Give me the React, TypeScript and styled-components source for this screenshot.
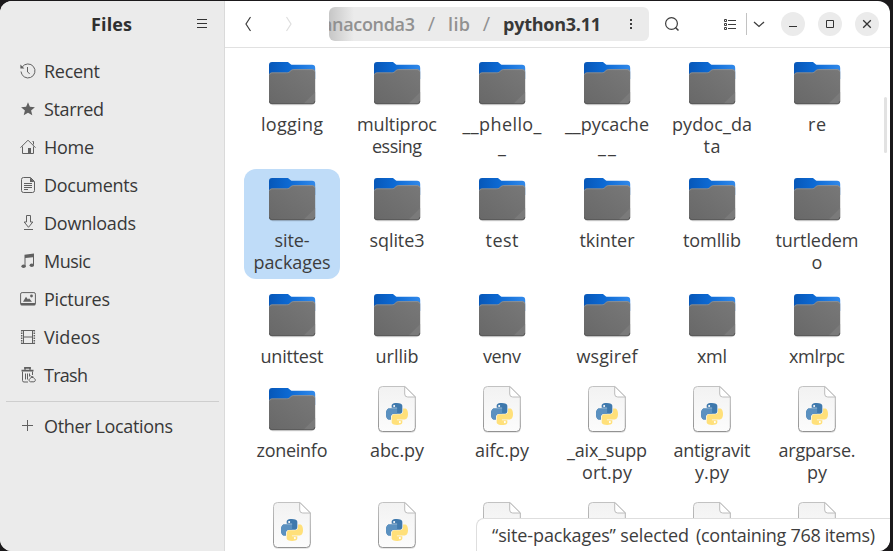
import React, { useLayoutEffect, useRef, useState } from "react";
import styled, { createGlobalStyle } from "styled-components";

const GlobalStyle = createGlobalStyle`
  * { box-sizing: border-box; }
  body {
    margin: 0;
    background: #1b191b;
    font-family: "Open Sans", "Noto Sans", sans-serif;
    font-size: 18px;
    color: #3d3d3d;
    overflow: hidden;
  }
  svg { display: block; flex: none; }
`;

const Window = styled.div`
  display: grid;
  grid-template-columns: 225px 1fr;
  width: 890px;
  height: 550px;
  margin-top: 1px;
  border-radius: 12px;
  overflow: hidden;
  background: #fff;
  position: relative;
`;

const Sidebar = styled.aside`
  display: flex;
  flex-direction: column;
  background: #ebebeb;
  border-right: 1px solid #dadada;
`;

const SidebarHeader = styled.header`
  display: grid;
  grid-template-columns: 1fr 34px;
  align-items: center;
  height: 46px;
  padding: 0 5px 0 38px;
  margin-bottom: 5px;
`;

const Title = styled.h1`
  margin: 0;
  font-size: 18px;
  font-weight: 700;
  line-height: 22px;
  text-align: center;
  color: #2f2f2f;
`;

const Centered = styled.div`
  display: flex;
  justify-content: center;
  align-items: center;
`;

const PlaceRow = styled.div`
  display: flex;
  align-items: center;
  height: 38px;
  padding-left: 20px;
  gap: 8px;
  line-height: 22px;
  color: #383838;
`;

const Separator = styled.hr`
  width: 213px;
  height: 1px;
  margin: 7px 0 5px 6px;
  border: 0;
  background: #cecece;
  flex: none;
`;

const Main = styled.main`
  display: flex;
  flex-direction: column;
  min-width: 0;
  height: 550px;
`;

const Toolbar = styled.header`
  display: flex;
  align-items: center;
  height: 47px;
  flex: none;
  padding-left: 6px;
  border-bottom: 1px solid #e1e1e1;
`;

const ToolButton = styled.button<{ $w: number; $dim?: boolean; $before?: number }>`
  display: flex;
  align-items: center;
  justify-content: center;
  width: ${(p) => p.$w}px;
  height: 34px;
  margin: 0 0 0 ${(p) => p.$before ?? 0}px;
  padding: 0;
  border: 0;
  background: none;
  color: ${(p) => (p.$dim ? "#dedede" : "#3d3d3d")};
`;

const PathBar = styled.div`
  display: flex;
  align-items: center;
  width: 320px;
  height: 34px;
  margin-left: 16px;
  border-radius: 6px;
  background: linear-gradient(to right, #c6c6c6, #ebebeb 25px);
`;

const Crumbs = styled.div`
  display: flex;
  flex: 1;
  min-width: 0;
  height: 34px;
  padding-right: 12px;
  align-items: center;
  justify-content: flex-end;
  overflow: hidden;
  font-weight: 600;
  line-height: 22px;
  color: #919191;

  > * { flex: none; }
`;

const Slash = styled.span`
  display: flex;
  justify-content: center;
  width: 33px;
  font-size: 20px;
  font-weight: 400;
`;

const Current = styled.span`
  color: #383838;
  font-weight: 700;
`;

const Divider = styled.span`
  width: 1px;
  height: 22px;
  background: #c2c2c2;
`;

const WindowControls = styled.div`
  display: flex;
  gap: 13px;
  margin-left: 11px;
`;

const RoundButton = styled.button`
  display: flex;
  align-items: center;
  justify-content: center;
  width: 24px;
  height: 24px;
  padding: 0;
  border: 0;
  border-radius: 50%;
  background: #ebebeb;
  color: #333;
`;

const FileGrid = styled.div`
  display: grid;
  grid-template-columns: repeat(6, 96px);
  column-gap: 9px;
  row-gap: 6px;
  align-items: start;
  padding: 5px 0 0 19px;
  overflow: hidden;
  flex: 1;
`;

const FileCell = styled.div<{ $selected?: boolean }>`
  display: flex;
  flex-direction: column;
  align-items: center;
  padding: 6px 0;
  border-radius: 12px;
  background: ${(p) => (p.$selected ? "#bfdcf8" : "transparent")};
`;

const FileName = styled.div`
  display: flex;
  flex-direction: column;
  align-items: center;
  margin-top: 6px;
  line-height: 22px;
`;

const ScrollThumb = styled.div`
  position: absolute;
  right: 3px;
  top: 96px;
  width: 3px;
  height: 56px;
  border-radius: 2px;
  background: #e2e2e2;
`;

const StatusBar = styled.div`
  position: absolute;
  right: 0;
  bottom: 0;
  display: flex;
  gap: 7px;
  width: 414px;
  height: 33px;
  padding: 5px 0 0 15px;
  border: 1px solid #dedede;
  border-width: 1px 0 0 1px;
  border-radius: 8px 0 0 0;
  background: #fff;
  line-height: 22px;
  color: #3d3d3d;
`;

const Glyphs = styled.span`
  display: inline-block;
  white-space: pre;
`;

/** A line of text whose tracking is adjusted so that it spans `width` pixels. */
function Line({ text, width }: { text: string; width: number }) {
  const ref = useRef<HTMLSpanElement>(null);
  const [gap, setGap] = useState(0);
  useLayoutEffect(() => {
    if (ref.current) {
      const natural = ref.current.getBoundingClientRect().width;
      setGap(text.length > 1 ? (width - natural) / (text.length - 1) : 0);
    }
  }, [text, width]);
  return (
    <Glyphs ref={ref} style={{ letterSpacing: gap, marginRight: -gap }}>
      {text}
    </Glyphs>
  );
}

const stroke = { fill: "none", stroke: "currentColor", strokeWidth: 1 } as const;

const placeIcons: Record<string, React.ReactNode> = {
  Recent: (
    <g {...stroke}>
      <path d="M2.2 4A7 7 0 1 1 1 8.5M7.5 4v5l2.2 1.7" />
      <path d="M.4 1.5v4h4z" fill="currentColor" stroke="none" />
    </g>
  ),
  Starred: <path fill="currentColor" d="M8 1.2l1.9 4.6 5 .4-3.8 3.2 1.2 4.9L8 11.7l-4.3 2.6 1.2-4.9L1.1 6.2l5-.4z" />,
  Home: (
    <g {...stroke}>
      <path d="M.5 8.7L8 1.2l7.500 7.500M2.500 7.500v7h11v-7M12.500 2.500h1v3" />
      <path d="M8 9h3v5.500H8z" fill="currentColor" stroke="none" />
    </g>
  ),
  Documents: (
    <g {...stroke}>
      <path d="M3.500.5h7l4 4v9a2 2 0 0 1-2 2h-9a2 2 0 0 1-2-2v-11a2 2 0 0 1 2-2zM4 6.500h8M4 8.500h8M4 10.500h8M4 12.500h4" />
      <path d="M10 .5v4.500h4.500z" fill="currentColor" stroke="none" />
    </g>
  ),
  Downloads: <path {...stroke} d="M6.500.5h4v6.500h2.300l-4.300 5.300L4.200 7h2.300zM4 14.500h9" />,
  Music: (
    <g fill="currentColor">
      <path d="M4.500 1.700L14 .5v11.800h-1V4.200l-7.500.9v8.200h-1z" />
      <ellipse cx="3.600" cy="13.200" rx="2.200" ry="1.800" />
      <ellipse cx="11.800" cy="12.300" rx="2.200" ry="1.800" />
    </g>
  ),
  Pictures: (
    <g>
      <rect x=".6" y="1.600" width="14.800" height="12" rx="1.500" {...stroke} />
      <path fill="currentColor" d="M.5 12h15v1.500a1 1 0 0 1-1 1h-13a1 1 0 0 1-1-1zM3 10.800l3-5 2 2.700 1-1.200 3 3.500z" />
      <circle cx="11.500" cy="5" r="1.400" fill="currentColor" />
    </g>
  ),
  Videos: (
    <g {...stroke}>
      <path d="M3.500 1.500h9v13h-9zM3.500 8h9M1 1.500h14M1 14.500h14" />
      <path d="M1.700 1v14M14.300 1v14" strokeWidth="1.500" strokeDasharray="1.500 1" />
    </g>
  ),
  Trash: (
    <g {...stroke}>
      <path d="M2.500 4.500v9a1.500 1.500 0 0 0 1.500 1.500h4M12.500 4.500V8M5.500 6.500v6M7.500 6.500v6M9.500 6.500v3" />
      <path d="M1.500 3.700h12M5 2.500V.9h5v1.600" strokeWidth="1.800" />
      <path d="M10.500 14.800a1.700 1.700 0 0 1-.8-3l1.500-1.300h2l1.500 1.300a1.700 1.700 0 0 1-.8 3zM10.500 8.500l1.700 2 .8-1.500" />
    </g>
  ),
  "Other Locations": <path {...stroke} d="M7.500 2v11M2 7.500h11" />,
};

const places: [string, number][] = [
  ["Recent", 56],
  ["Starred", 60],
  ["Home", 50],
  ["Documents", 94],
  ["Downloads", 92],
  ["Music", 47],
  ["Pictures", 66],
  ["Videos", 56],
  ["Trash", 44],
];

function Place({ name, width }: { name: string; width: number }) {
  return (
    <PlaceRow>
      <svg width="16" height="16" viewBox="0 0 16 16" color="#606060">
        {placeIcons[name]}
      </svg>
      <Line text={name} width={width} />
    </PlaceRow>
  );
}

function FolderIcon() {
  return (
    <svg width="48" height="48" viewBox="0 0 48 48">
      <defs>
        <linearGradient id="folderBack" x1="0" y1="0" x2="1" y2="0">
          <stop offset="0" stopColor="#0757b8" />
          <stop offset=".45" stopColor="#0d6ad4" />
          <stop offset="1" stopColor="#3189ea" />
        </linearGradient>
        <linearGradient id="folderFront" x1="0" y1="1" x2="1" y2="0">
          <stop offset="0" stopColor="#686868" />
          <stop offset="1" stopColor="#787878" />
        </linearGradient>
      </defs>
      <rect x="1.200" y="36" width="45.600" height="10.300" rx="4" fill="#000" opacity=".16" />
      <path fill="url(#folderBack)" d="M1 20V6a3 3 0 0 1 3-3h14.500c1.500 0 2.300.5 3 1.200S23 5.800 24.500 5.800H44a3.200 3.200 0 0 1 3.200 3.200V20z" />
      <path fill="url(#folderFront)" d="M1 16.500a3 3 0 0 1 3-3h14.500c2 0 2.800-.6 3.700-1.500s1.800-1.700 3.500-1.700h18.500a3 3 0 0 1 3 3V42a3 3 0 0 1-3 3H4a3 3 0 0 1-3-3z" />
      <path fill="none" stroke="#a0a0a0" strokeWidth=".6" d="M1.500 15.800a2.500 2.500 0 0 1 2.500-2h14.500c2 0 2.800-.6 3.700-1.500s1.800-1.700 3.500-1.700h18.500a2.500 2.500 0 0 1 2.500 2" />
      <path fill="#808080" d="M47.200 33V42a3 3 0 0 1-3 3H35.200z" opacity=".65" />
      <path fill="none" stroke="#505050" strokeWidth=".7" d="M1.400 42a2.600 2.600 0 0 0 2.600 2.700h40.200a2.600 2.600 0 0 0 2.600-2.700" />
    </svg>
  );
}

const SNAKE =
  "M11.900 0C6 0 6.200 2.600 6.200 2.600V5.300h5.900v.8H3.800S0 5.700 0 12s3.400 6 3.400 6h2v-2.800s-.1-3.400 3.400-3.400h5.800s3.200 0 3.200-3.100V3.200S18.300 0 11.900 0z";

function PythonFileIcon() {
  return (
    <svg width="48" height="48" viewBox="0 0 48 48">
      <defs>
        <linearGradient id="sheet" x1="0" y1="0" x2="0" y2="1">
          <stop offset="0" stopColor="#f2f2f2" />
          <stop offset="1" stopColor="#fcfcfc" />
        </linearGradient>
        <linearGradient id="sheetEdge" x1="0" y1="0" x2="0" y2="1">
          <stop offset="0" stopColor="#c2c2c2" />
          <stop offset="1" stopColor="#929292" />
        </linearGradient>
      </defs>
      <rect x="5.500" y="38" width="37" height="9.700" rx="4" fill="#000" opacity=".12" />
      <path
        fill="url(#sheet)"
        stroke="url(#sheetEdge)"
        d="M9.500 1.500h22.500l10.300 10.300V42.500a4 4 0 0 1-4 4h-28.800a4 4 0 0 1-4-4v-37a4 4 0 0 1 4-4z"
      />
      <path fill="#fff" stroke="#bcbcbc" d="M31.700 1.500v7.500a3 3 0 0 0 3 3h7.600z" />
      <g transform="translate(13 18) scale(.917)">
        <path fill="#3f79ad" d={SNAKE} />
        <path fill="#5b91c0" d="M0 12C0 9 1 6.100 3.800 6.100h8.300V11.800H8.800c-3.500 0-3.400 3.400-3.400 3.400V18h-2S0 18 0 12z" />
        <path fill="#ffe07a" d={SNAKE} transform="rotate(180 12 12)" />
        <circle cx="8.900" cy="3.200" r="1.150" fill="#fff" />
        <circle cx="15.100" cy="20.800" r="1.150" fill="#fff" />
      </g>
    </svg>
  );
}

type TextLine = [string, number];
interface Entry {
  lines: TextLine[];
  kind?: "py";
  selected?: boolean;
}

const entries: Entry[] = [
  { lines: [["logging", 62]] },
  { lines: [["multiproc", 80], ["essing", 50]] },
  { lines: [["__phello_", 79], ["_", 9]] },
  { lines: [["__pycache", 84], ["__", 18]] },
  { lines: [["pydoc_da", 80], ["ta", 17]] },
  { lines: [["re", 18]] },
  { lines: [["site-", 35], ["packages", 77]], selected: true },
  { lines: [["sqlite3", 55]] },
  { lines: [["test", 33]] },
  { lines: [["tkinter", 55]] },
  { lines: [["tomllib", 58]] },
  { lines: [["turtledem", 83], ["o", 11]] },
  { lines: [["unittest", 63]] },
  { lines: [["urllib", 43]] },
  { lines: [["venv", 38]] },
  { lines: [["wsgiref", 61]] },
  { lines: [["xml", 30]] },
  { lines: [["xmlrpc", 56]] },
  { lines: [["zoneinfo", 71]] },
  { lines: [["abc.py", 54]], kind: "py" },
  { lines: [["aifc.py", 54]], kind: "py" },
  { lines: [["_aix_supp", 80], ["ort.py", 50]], kind: "py" },
  { lines: [["antigravit", 77], ["y.py", 34]], kind: "py" },
  { lines: [["argparse.", 77], ["py", 20]], kind: "py" },
  ...Array.from({ length: 6 }, (): Entry => ({ lines: [], kind: "py" })),
];

export default function App() {
  return (
    <>
      <GlobalStyle />
      <Window>
        <Sidebar>
          <SidebarHeader>
            <Title>
              <Line text="Files" width={41} />
            </Title>
            <Centered>
              <svg width="12" height="12" viewBox="0 0 12 12" color="#333">
                <path {...stroke} d="M1 1.500h10M1 5.500h10M1 9.500h10" />
              </svg>
            </Centered>
          </SidebarHeader>
          {places.map(([name, width]) => (
            <Place key={name} name={name} width={width} />
          ))}
          <Separator />
          <Place name="Other Locations" width={129} />
        </Sidebar>
        <Main>
          <Toolbar>
            <ToolButton $w={34} aria-label="Back">
              <svg width="8" height="16" viewBox="0 0 8 16">
                <path {...stroke} strokeWidth="1.200" d="M6.500 1L2 8l4.500 7" />
              </svg>
            </ToolButton>
            <ToolButton $w={48} $dim aria-label="Forward">
              <svg width="8" height="16" viewBox="0 0 8 16">
                <path {...stroke} strokeWidth="1.200" d="M1.500 1L6 8l-4.500 7" />
              </svg>
            </ToolButton>
            <PathBar>
              <Crumbs>
                <Line text="anaconda3" width={93} />
                <Slash>/</Slash>
                <Line text="lib" width={22} />
                <Slash>/</Slash>
                <Current>
                  <Line text="python3.11" width={98} />
                </Current>
              </Crumbs>
              <ToolButton $w={36} aria-label="Path menu">
                <svg width="2" height="12" viewBox="0 0 2 12" fill="currentColor">
                  <path d="M0 1h2v2H0zM0 5h2v2H0zM0 9h2v2H0z" />
                </svg>
              </ToolButton>
            </PathBar>
            <ToolButton $w={46} aria-label="Search">
              <svg width="16" height="16" viewBox="0 0 16 16">
                <circle cx="7.500" cy="7.500" r="5.900" {...stroke} strokeWidth="1.200" />
                <path d="M11.500 11.500l3 3" {...stroke} strokeWidth="1.500" />
              </svg>
            </ToolButton>
            <ToolButton $w={32} $before={19} aria-label="List view">
              <svg width="14" height="12" viewBox="0 0 14 12">
                <path {...stroke} d="M1.500 1.500h2v2h-2zM1.500 5.500h2v2h-2zM1.500 9.500h2v2h-2zM5 2.500h8M5 6.500h8M5 10.500h8" />
              </svg>
            </ToolButton>
            <Divider />
            <ToolButton $w={23} aria-label="View options">
              <svg width="12" height="8" viewBox="0 0 12 8">
                <path {...stroke} strokeWidth="1.300" d="M1 2l5 4.500L11 2" />
              </svg>
            </ToolButton>
            <WindowControls>
              <RoundButton aria-label="Minimize">
                <svg width="10" height="10" viewBox="0 0 10 10">
                  <path {...stroke} d="M1 7.500h8" />
                </svg>
              </RoundButton>
              <RoundButton aria-label="Maximize">
                <svg width="10" height="10" viewBox="0 0 10 10">
                  <path {...stroke} d="M1.500 1.500h7v7h-7z" />
                </svg>
              </RoundButton>
              <RoundButton aria-label="Close">
                <svg width="10" height="10" viewBox="0 0 10 10">
                  <path {...stroke} strokeWidth="1.300" d="M1.200 1.200l7.600 7.600M8.800 1.200L1.200 8.800" />
                </svg>
              </RoundButton>
            </WindowControls>
          </Toolbar>
          <FileGrid>
            {entries.map((entry, i) => (
              <FileCell key={i} $selected={entry.selected}>
                {entry.kind === "py" ? <PythonFileIcon /> : <FolderIcon />}
                <FileName>
                  {entry.lines.map(([text, width]) => (
                    <Line key={text} text={text} width={width} />
                  ))}
                </FileName>
              </FileCell>
            ))}
          </FileGrid>
        </Main>
        <ScrollThumb />
        <StatusBar>
          <Line text="“site-packages” selected" width={197} />
          <Line text="(containing 768 items)" width={179} />
        </StatusBar>
      </Window>
    </>
  );
}
